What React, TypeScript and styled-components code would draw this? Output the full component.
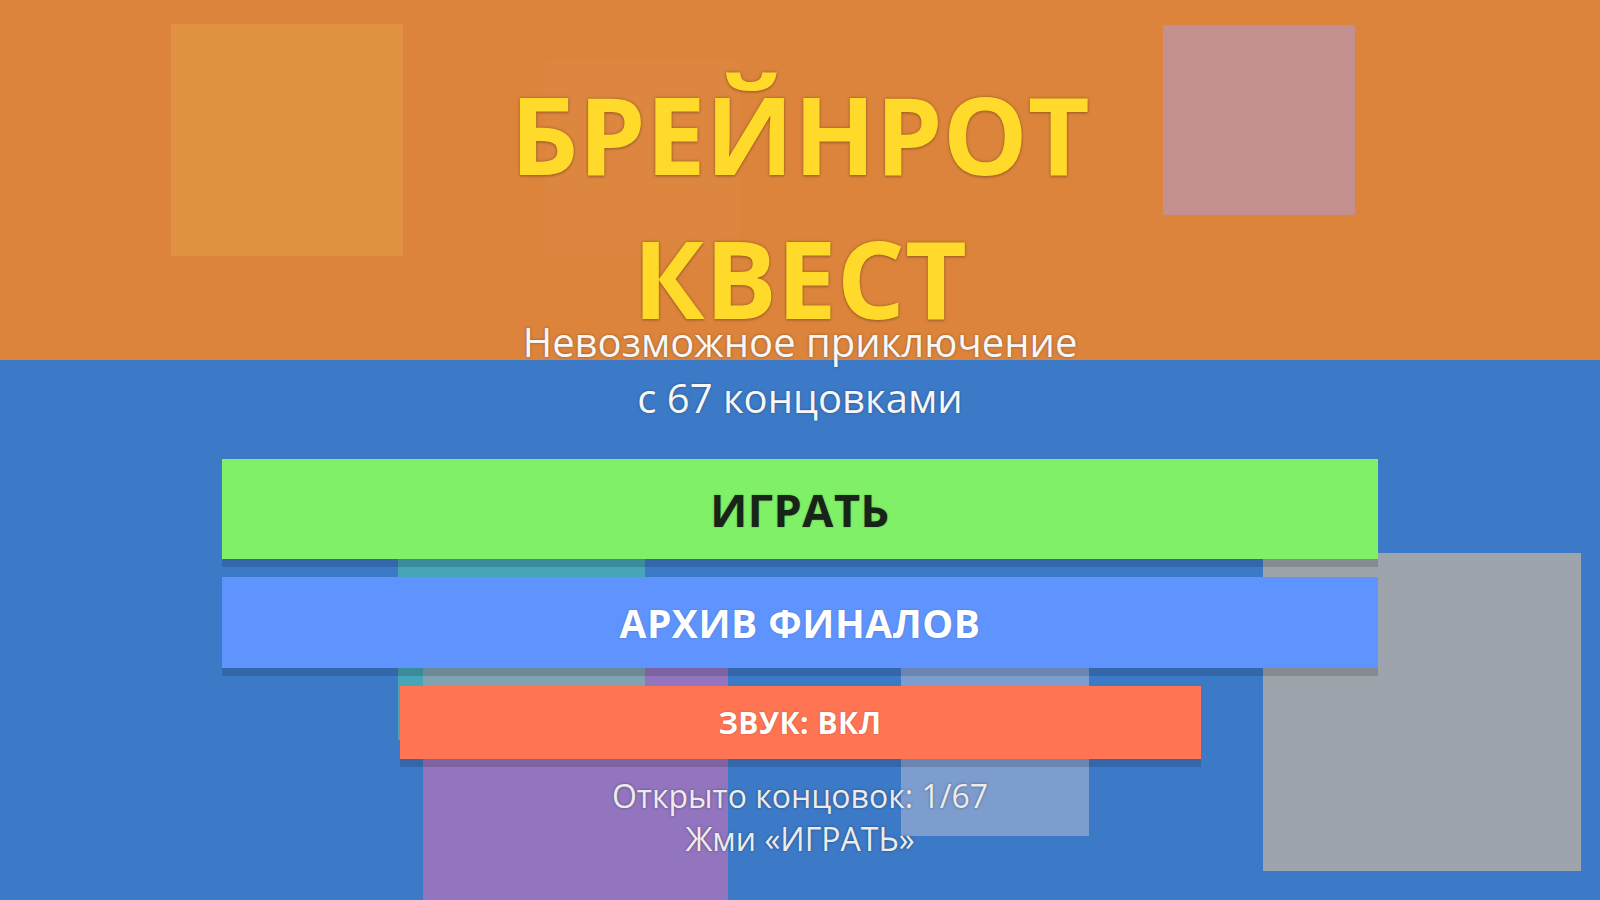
import React from "react";
import styled, { createGlobalStyle } from "styled-components";

const GlobalStyle = createGlobalStyle`
  html, body {
    margin: 0;
    padding: 0;
  }
  body {
    font-family: "Open Sans", "Noto Sans", sans-serif;
    overflow: hidden;
  }
`;

const Scene = styled.main`
  position: relative;
  width: 100%;
  height: 100vh;
  min-height: 900px;
  overflow: hidden;
  background: linear-gradient(to bottom, #dc843c 0, #dc843c 40%, #3c7ac8 40%, #3c7ac8 100%);
`;

/* Floating background blocks, each placed on the backdrop canvas */
const Block = styled.div<{ $x: number; $y: number; $w: number; $h: number; $fill: string }>`
  position: absolute;
  left: ${(p) => p.$x}px;
  top: ${(p) => p.$y}px;
  width: ${(p) => p.$w}px;
  height: ${(p) => p.$h}px;
  background: ${(p) => p.$fill};
  pointer-events: none;
`;

const Content = styled.div`
  position: relative;
  z-index: 1;
  display: flex;
  flex-direction: column;
  align-items: center;
  padding-top: 62px;
  text-align: center;
`;

const Title = styled.h1`
  margin: 0;
  font-size: 107px;
  line-height: 144px;
  font-weight: 700;
  color: #ffda2b;
  text-shadow: 0 0 3px rgba(110, 60, 0, 0.65), 0 2px 2px rgba(0, 0, 0, 0.12);
`;

const Subtitle = styled.p`
  margin: -36px 0 0;
  font-size: 40px;
  line-height: 56px;
  font-weight: 400;
  color: #f7f7f7;
  text-shadow: 0 0 3px rgba(0, 0, 0, 0.35);
`;

const Menu = styled.nav`
  display: flex;
  flex-direction: column;
  align-items: center;
  gap: 18px;
  margin-top: 33px;
`;

const MenuButton = styled.button<{ $bg: string; $fg: string; $w: number; $h: number; $size: number }>`
  display: flex;
  align-items: center;
  justify-content: center;
  width: ${(p) => p.$w}px;
  height: ${(p) => p.$h}px;
  padding: 0;
  border: none;
  border-radius: 0;
  background: ${(p) => p.$bg};
  color: ${(p) => p.$fg};
  font-family: "Open Sans", "Noto Sans", sans-serif;
  font-size: ${(p) => p.$size}px;
  font-weight: 700;
  letter-spacing: 0.5px;
  box-shadow: 0 8px 0 rgba(0, 0, 0, 0.15);
  text-shadow: 0 0 2px rgba(0, 0, 0, 0.25);
  cursor: pointer;
`;

const Stats = styled.div`
  margin-top: 15px;
  font-size: 32px;
  line-height: 43px;
  color: #ececec;
  text-shadow: 0 0 3px rgba(0, 0, 0, 0.4);
`;

export default function App() {
  return (
    <>
      <GlobalStyle />
      <Scene>
        <Block $x={171} $y={24} $w={232} $h={232} $fill="#e09142" />
        <Block $x={545} $y={61} $w={195} $h={195} $fill="rgba(255, 255, 255, 0.025)" />
        <Block $x={1163} $y={25} $w={192} $h={190} $fill="#c48f8f" />
        <Block $x={1263} $y={553} $w={318} $h={318} $fill="#9ea4ac" />
        <Block $x={423} $y={600} $w={305} $h={320} $fill="#9375bf" />
        <Block $x={398} $y={500} $w={247} $h={240} $fill="rgba(90, 255, 150, 0.33)" />
        <Block $x={901} $y={600} $w={188} $h={236} $fill="rgba(205, 200, 215, 0.45)" />

        <Content>
          <Title>
            БРЕЙНРОТ
            <br />
            КВЕСТ
          </Title>
          <Subtitle>
            Невозможное приключение
            <br />с 67 концовками
          </Subtitle>
          <Menu>
            <MenuButton $bg="#80f067" $fg="#172417" $w={1156} $h={100} $size={45}>
              ИГРАТЬ
            </MenuButton>
            <MenuButton $bg="#5f94ff" $fg="#ffffff" $w={1156} $h={91} $size={39}>
              АРХИВ ФИНАЛОВ
            </MenuButton>
            <MenuButton $bg="#ff7452" $fg="#ffffff" $w={801} $h={73} $size={30}>
              ЗВУК: ВКЛ
            </MenuButton>
          </Menu>
          <Stats>
            Открыто концовок: 1/67
            <br />
            Жми «ИГРАТЬ»
          </Stats>
        </Content>
      </Scene>
    </>
  );
}
